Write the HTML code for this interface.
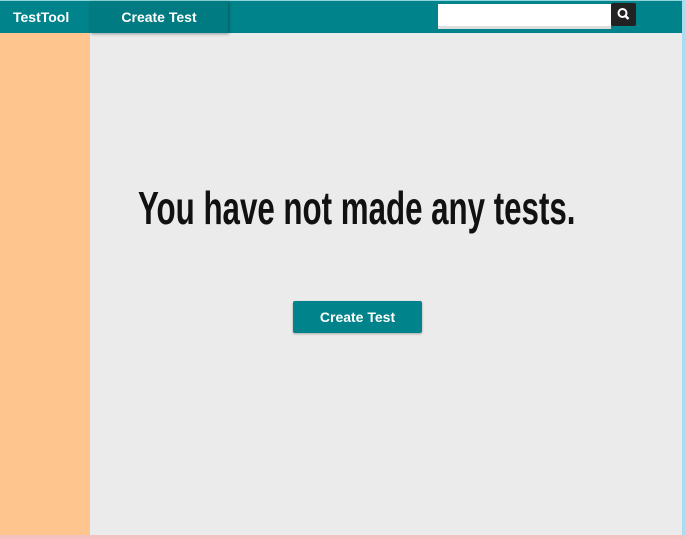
<!DOCTYPE html>
<html><head><style>
body{margin:0;width:685px;height:539px;overflow:hidden;background:#ebebeb;font-family:"Liberation Sans",sans-serif;position:relative}
.hdr{position:absolute;left:0;top:0;width:685px;height:33px;background:#00838a;border-top:1px solid #8fd6dc;box-sizing:border-box}
.brand{position:absolute;left:13px;top:8px;color:#fff;font-weight:bold;font-size:14px}
.tab{position:absolute;left:90px;top:0px;width:138px;height:32px;background:#007b82;box-shadow:1px 1px 3px rgba(0,0,0,.35);color:#fff;font-weight:bold;font-size:14px;text-align:center;line-height:32px}
.search{position:absolute;left:438px;top:3px;width:173px;height:22px;background:#fff;border-bottom:3px solid #ddd}
.sbtn{position:absolute;left:611px;top:2px;width:25px;height:23px;background:#222;border-radius:2px}
.side{position:absolute;left:0;top:33px;width:90px;height:506px;background:#ffc58f}
.rb{position:absolute;left:682px;top:0;width:3px;height:539px;background:#a8dcf0}
.bb{position:absolute;left:0;top:535px;width:685px;height:4px;background:#f4c0c0}
h1{position:absolute;left:138px;top:181px;margin:0;font-family:"Liberation Sans",sans-serif;font-weight:bold;font-size:46px;color:#111;white-space:nowrap;transform:scaleX(.68);transform-origin:left top}
.btn{position:absolute;left:293px;top:301px;width:129px;height:32px;background:#00838a;border-radius:2px;box-shadow:0 1px 2px rgba(0,0,0,.3);color:#fff;font-weight:bold;font-size:14px;text-align:center;line-height:32px}
</style></head><body>
<div class="hdr"><div class="brand">TestTool</div><div class="tab">Create Test</div>
<div class="search"></div>
<div class="sbtn"><svg width="25" height="23"><circle cx="11.5" cy="10" r="4" fill="none" stroke="#fff" stroke-width="2"/><line x1="14.5" y1="13" x2="17.5" y2="16" stroke="#fff" stroke-width="2.4"/></svg></div></div>
<div class="side"></div>
<h1>You have not made any tests.</h1>
<div class="btn">Create Test</div>
<div class="rb"></div><div class="bb"></div>
</body></html>
